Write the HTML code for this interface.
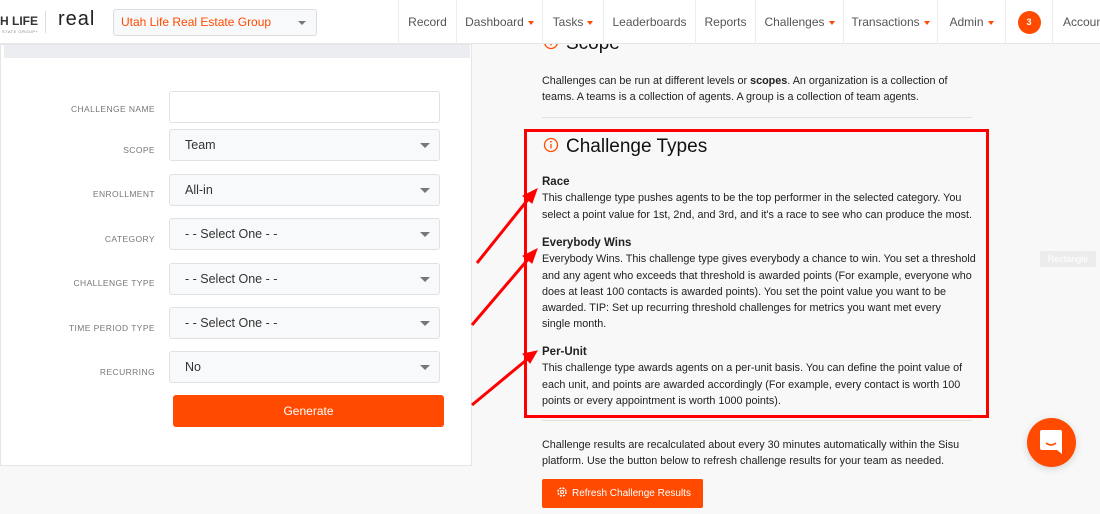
<!DOCTYPE html>
<html><head><meta charset="utf-8"><style>
*{box-sizing:border-box;margin:0;padding:0}
body{width:1100px;height:514px;overflow:hidden;background:#f8f8f8;font-family:"Liberation Sans",sans-serif;position:relative;color:#222}
.nav{position:absolute;left:0;top:0;width:1100px;height:44px;background:#fff;border-bottom:1px solid #e6e6e6;z-index:5}
.ni{position:absolute;top:0;height:44px;line-height:44px;font-size:12px;color:#555;border-left:1px solid #ececec;text-align:center}
.car{display:inline-block;width:0;height:0;border-left:3.5px solid transparent;border-right:3.5px solid transparent;border-top:4px solid #ff4a00;margin-left:4px;vertical-align:middle}
.panel{position:absolute;left:0;top:44px;width:472px;height:422px;background:#fff;border:1px solid #e6e6e6}
.ph{position:absolute;left:3px;top:0;width:466px;height:13px;background:#ebedf0}
.lbl{position:absolute;right:316px;font-size:8.5px;letter-spacing:.4px;color:#777;text-align:right}
.fld{position:absolute;left:168px;width:271px;height:32px;border:1px solid #dfe1e5;border-radius:3px;background:#f8f9fa;font-size:12.5px;color:#333;padding-left:15px;line-height:30px}
.fld .a{position:absolute;right:9px;top:13px;border-left:5px solid transparent;border-right:5px solid transparent;border-top:5px solid #777}
.txt{position:absolute;left:542px;font-size:10.8px;line-height:16.3px;color:#222;white-space:nowrap}
.txt b{font-size:11.5px}
</style></head><body>
<div class="nav">
 <div style="position:absolute;left:0;top:14px;font-size:12px;font-weight:bold;color:#333">H LIFE</div>
 <div style="position:absolute;left:2px;top:29px;font-size:4px;color:#888;letter-spacing:.5px">STATE GROUP+</div>
 <div style="position:absolute;left:45px;top:11px;width:1px;height:22px;background:#ddd"></div>
 <div style="position:absolute;left:58px;top:8px;font-size:20px;color:#222;letter-spacing:1px">real</div>
 <div style="position:absolute;left:113px;top:9px;width:204px;height:27px;border:1px solid #ddd;border-radius:3px;background:#f8f9fa;font-size:12px;color:#ff4a00;padding-left:7px;line-height:25px">Utah Life Real Estate Group<span style="position:absolute;right:10px;top:11px;border-left:4px solid transparent;border-right:4px solid transparent;border-top:4px solid #777"></span></div>
 <div class="ni" style="left:398px;width:58px">Record</div>
 <div class="ni" style="left:456px;width:86px">Dashboard<span class="car"></span></div>
 <div class="ni" style="left:542px;width:61px">Tasks<span class="car"></span></div>
 <div class="ni" style="left:603px;width:92px">Leaderboards</div>
 <div class="ni" style="left:695px;width:60px">Reports</div>
 <div class="ni" style="left:755px;width:88px">Challenges<span class="car"></span></div>
 <div class="ni" style="left:843px;width:94px">Transactions<span class="car"></span></div>
 <div class="ni" style="left:937px;width:68px">Admin<span class="car"></span></div>
 <div class="ni" style="left:1005px;width:47px"><span style="display:inline-block;width:23px;height:23px;border-radius:50%;background:#ff4a00;color:#fff;font-size:9px;font-weight:bold;line-height:23px;vertical-align:middle">3</span></div>
 <div class="ni" style="left:1052px;width:60px;text-align:left;padding-left:10px">Account</div>
</div>
<div class="panel"><div class="ph"></div>
 <div class="lbl" style="top:59px">CHALLENGE NAME</div>
 <div class="fld" style="top:46px;background:#fff"></div>
 <div class="lbl" style="top:100px">SCOPE</div>
 <div class="fld" style="top:84px">Team<span class="a"></span></div>
 <div class="lbl" style="top:144px">ENROLLMENT</div>
 <div class="fld" style="top:129px">All-in<span class="a"></span></div>
 <div class="lbl" style="top:189px">CATEGORY</div>
 <div class="fld" style="top:173px">- - Select One - -<span class="a"></span></div>
 <div class="lbl" style="top:233px">CHALLENGE TYPE</div>
 <div class="fld" style="top:218px">- - Select One - -<span class="a"></span></div>
 <div class="lbl" style="top:278px">TIME PERIOD TYPE</div>
 <div class="fld" style="top:262px">- - Select One - -<span class="a"></span></div>
 <div class="lbl" style="top:322px">RECURRING</div>
 <div class="fld" style="top:306px">No<span class="a"></span></div>
 <div style="position:absolute;left:172px;top:350px;width:271px;height:32px;background:#ff4a00;border-radius:3px;color:#fff;font-size:12px;text-align:center;line-height:32px">Generate</div>
</div>
<svg style="position:absolute;left:543px;top:34px" width="18" height="18"><circle cx="8" cy="8" r="6.5" fill="none" stroke="#ff4a00" stroke-width="1.3"/><line x1="8" y1="7" x2="8" y2="11.5" stroke="#ff4a00" stroke-width="1.3"/></svg>
<div style="position:absolute;left:566px;top:33px;font-size:19px;color:#111">Scope</div>
<div class="txt" style="top:73px">Challenges can be run at different levels or <b style="font-size:10.8px">scopes</b>. An organization is a collection of<br>teams. A teams is a collection of agents. A group is a collection of team agents.</div>
<div style="position:absolute;left:542px;top:117px;width:430px;height:1px;background:#e2e2e2"></div>
<div style="position:absolute;left:524px;top:129px;width:465px;height:289px;border:3px solid #f00"></div>
<svg style="position:absolute;left:543px;top:137px" width="18" height="18"><circle cx="8" cy="8" r="6.5" fill="none" stroke="#ff4a00" stroke-width="1.3"/><line x1="8" y1="7" x2="8" y2="11.5" stroke="#ff4a00" stroke-width="1.3"/><circle cx="8" cy="4.8" r=".9" fill="#ff4a00"/></svg>
<div style="position:absolute;left:566px;top:136px;font-size:19px;color:#111">Challenge Types</div>
<div class="txt" style="top:174px"><b>Race</b><br>This challenge type pushes agents to be the top performer in the selected category. You<br>select a point value for 1st, 2nd, and 3rd, and it's a race to see who can produce the most.</div>
<div class="txt" style="top:235px"><b>Everybody Wins</b><br>Everybody Wins. This challenge type gives everybody a chance to win. You set a threshold<br>and any agent who exceeds that threshold is awarded points (For example, everyone who<br>does at least 100 contacts is awarded points). You set the point value you want to be<br>awarded. TIP: Set up recurring threshold challenges for metrics you want met every<br>single month.</div>
<div class="txt" style="top:344px"><b>Per-Unit</b><br>This challenge type awards agents on a per-unit basis. You can define the point value of<br>each unit, and points are awarded accordingly (For example, every contact is worth 100<br>points or every appointment is worth 1000 points).</div>
<div style="position:absolute;left:542px;top:420px;width:430px;height:1px;background:#e2e2e2"></div>
<div class="txt" style="top:437px">Challenge results are recalculated about every 30 minutes automatically within the Sisu<br>platform. Use the button below to refresh challenge results for your team as needed.</div>
<div style="position:absolute;left:542px;top:479px;width:161px;height:29px;background:#ff4a00;border-radius:2px;color:#fff;font-size:10px;line-height:29px;padding-left:30px">Refresh Challenge Results</div>
<svg style="position:absolute;left:556px;top:486px" width="12" height="12"><circle cx="6" cy="6" r="4" fill="none" stroke="#fff" stroke-width="1.5" stroke-dasharray="2 1.2"/><circle cx="6" cy="6" r="1.5" fill="none" stroke="#fff"/></svg>
<div style="position:absolute;left:1040px;top:251px;width:56px;height:16px;background:#ececec;border-radius:2px;color:#fff;font-size:9px;text-align:center;line-height:16px">Rectangle</div>
<div style="position:absolute;left:1027px;top:418px;width:49px;height:49px;border-radius:50%;background:#ff4a00;box-shadow:0 2px 8px rgba(0,0,0,.15)"></div>
<svg style="position:absolute;left:1039px;top:429px" width="26" height="28"><path d="M3 1h18a2 2 0 0 1 2 2v22l-5-4H3a2 2 0 0 1-2-2V3a2 2 0 0 1 2-2z" fill="#fff"/><path d="M7 14q5 4 10 0" fill="none" stroke="#ff4a00" stroke-width="1.5"/></svg>
<svg style="position:absolute;left:0;top:0" width="1100" height="514"><g stroke="#f00" stroke-width="3" fill="#f00">
<line x1="477" y1="263" x2="530" y2="197"/><polygon points="537,189 523,196 532,203" stroke-width="1"/>
<line x1="472" y1="325" x2="530" y2="257"/><polygon points="537,249 523,256 532,263" stroke-width="1"/>
<line x1="472" y1="405" x2="530" y2="357"/><polygon points="537,351 523,354 530,363" stroke-width="1"/>
</g></svg>
</body></html>
